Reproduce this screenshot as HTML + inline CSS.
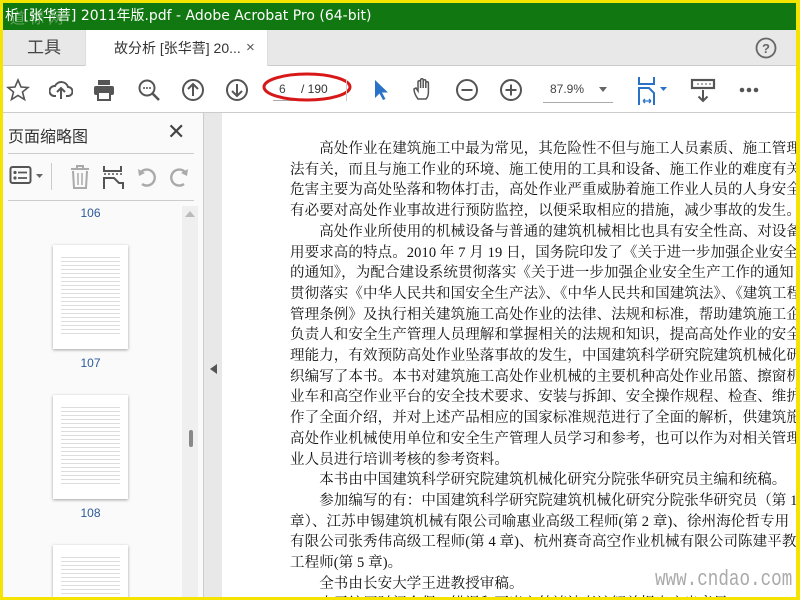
<!DOCTYPE html>
<html style="background:#f5e400"><head><meta charset="utf-8"><style>
*{margin:0;padding:0;box-sizing:border-box}
body{width:800px;height:600px;overflow:hidden;background:#f5e400;position:relative;font-family:"Liberation Sans","Noto Sans CJK SC",sans-serif}
.abs{position:absolute}
#title{left:3px;top:3px;width:793px;height:27px;background:#117711;color:#fff;font-family:"DejaVu Sans","Noto Sans CJK SC",sans-serif;font-size:14px;line-height:27px;padding-left:2px;white-space:nowrap;overflow:hidden}
#tabs{left:3px;top:30px;width:793px;height:36px;background:#e8e8e8;border-bottom:1px solid #ccc}
#tool{left:0;top:0;width:82px;height:36px;font-size:17px;color:#444;text-align:center;line-height:36px}
#tab{left:82px;top:0;width:183px;height:37px;background:#fff;font-size:14px;color:#333;line-height:36px;padding-left:28px;border-left:1px solid #ddd;border-right:1px solid #ddd}
#bar{left:3px;top:66px;width:793px;height:47px;background:#fff;border-bottom:1px solid #ccc}
#panel{left:3px;top:113px;width:201px;height:484px;background:#fafafa;border-right:1px solid #ccc;overflow:hidden}
#strip{left:204px;top:113px;width:18px;height:484px;background:#e8e8e8}
#page{left:222px;top:113px;width:574px;height:484px;background:#fff;overflow:hidden}
.ln{position:absolute;left:68px;white-space:nowrap;font-family:"Liberation Serif","Noto Serif CJK SC",serif;font-size:14.5px;color:#111;letter-spacing:0.1px}
.th{position:absolute;left:50px;width:75px;height:104px;background:#fff;box-shadow:0 1px 3px rgba(0,0,0,.35);padding:9px 8px 14px}
.th div{width:100%;height:100%;background-image:repeating-linear-gradient(#fff 0,#fff 3px,#ddd 3px,#ddd 4px)}
.lbl{position:absolute;left:0;width:175px;text-align:center;font-size:12px;color:#2c5a9a}
svg{position:absolute}
</style></head><body>
<div id="title" class="abs">析 [张华菩] 2011年版.pdf - Adobe Acrobat Pro (64-bit)</div>
<div class="abs" style="left:10px;top:7px;font-size:15px;color:rgba(255,255,255,.35)">道 标 网</div>
<div id="tabs" class="abs">
 <div id="tool" class="abs">工具</div>
 <div id="tab" class="abs">故分析 [张华菩] 20...<span style="position:absolute;left:160px;font-size:15px;color:#555">×</span></div>
 <svg style="left:752px;top:7px" width="22" height="22"><circle cx="11" cy="11" r="9.5" fill="none" stroke="#666" stroke-width="1.8"/><text x="11" y="16" text-anchor="middle" font-size="13" font-weight="bold" fill="#666" font-family="Liberation Sans">?</text></svg>
</div>
<div id="bar" class="abs">
 <svg style="left:3px;top:12px" width="24" height="24"><polygon points="12,2 15,9 22,9.5 16.5,14 18.5,21.5 12,17.5 5.5,21.5 7.5,14 2,9.5 9,9" fill="none" stroke="#555" stroke-width="1.6"/></svg>
 <svg style="left:46px;top:12px" width="24" height="24"><path d="M7 18 H5 A5 5 0 0 1 6 8 A7 7 0 0 1 19 9 A4.5 4.5 0 0 1 19 18 H17" fill="none" stroke="#555" stroke-width="2"/><path d="M12 21 V11 M8 14 L12 10 L16 14" fill="none" stroke="#555" stroke-width="2"/></svg>
 <svg style="left:89px;top:12px" width="24" height="24"><rect x="6" y="2" width="12" height="5" fill="#555"/><rect x="2" y="8" width="20" height="9" rx="2" fill="#555"/><rect x="6" y="14" width="12" height="8" fill="#fff" stroke="#555" stroke-width="2"/></svg>
 <svg style="left:134px;top:12px" width="24" height="24"><circle cx="10" cy="10" r="7.5" fill="none" stroke="#555" stroke-width="2"/><path d="M15.5 15.5 L22 22" stroke="#555" stroke-width="2.6"/><circle cx="7" cy="10" r="1" fill="#555"/><circle cx="10" cy="10" r="1" fill="#555"/><circle cx="13" cy="10" r="1" fill="#555"/></svg>
 <svg style="left:178px;top:12px" width="24" height="24"><circle cx="12" cy="12" r="10" fill="none" stroke="#555" stroke-width="2"/><path d="M12 18 V6 M7 11 L12 6 L17 11" fill="none" stroke="#555" stroke-width="2"/></svg>
 <svg style="left:222px;top:12px" width="24" height="24"><circle cx="12" cy="12" r="10" fill="none" stroke="#555" stroke-width="2"/><path d="M12 6 V18 M7 13 L12 18 L17 13" fill="none" stroke="#555" stroke-width="2"/></svg>
 <div class="abs" style="left:270px;top:16px;width:27px;height:19px;border-bottom:1px solid #aaa;font-size:12px;color:#444;padding-left:6px">6</div>
 <div class="abs" style="left:298px;top:16px;font-size:12px;color:#333">/ 190</div>
 <svg style="left:258px;top:3px" width="92" height="36"><ellipse cx="46" cy="18" rx="43" ry="13" fill="none" stroke="#d81818" stroke-width="3"/></svg>
 <div class="abs" style="left:343px;top:13px;width:1px;height:22px;background:#ccc"></div>
 <svg style="left:368px;top:12px" width="20" height="24"><path d="M4 2 L4 20 L8.5 15.5 L12 22 L14.5 21 L11 14.5 L17 14.5 Z" fill="#2a72c8"/></svg>
 <svg style="left:408px;top:11px" width="24" height="26"><path d="M7 22 C4 18 3 15 3 12 L5 11 L7 14 V5 A1.3 1.3 0 0 1 9.6 5 V11 V3 A1.3 1.3 0 0 1 12.2 3 V11 V4 A1.3 1.3 0 0 1 14.8 4 V11 V6 A1.3 1.3 0 0 1 17.4 6 V15 C17.4 19 16 21 15 22 Z" fill="none" stroke="#555" stroke-width="1.5"/></svg>
 <svg style="left:452px;top:12px" width="24" height="24"><circle cx="12" cy="12" r="10" fill="none" stroke="#555" stroke-width="2"/><path d="M6.5 12 H17.5" stroke="#555" stroke-width="2"/></svg>
 <svg style="left:496px;top:12px" width="24" height="24"><circle cx="12" cy="12" r="10" fill="none" stroke="#555" stroke-width="2"/><path d="M6.5 12 H17.5 M12 6.5 V17.5" stroke="#555" stroke-width="2"/></svg>
 <div class="abs" style="left:540px;top:16px;width:70px;height:21px;border-bottom:1px solid #aaa;font-size:12px;color:#444;padding-left:7px">87.9%</div>
 <svg style="left:596px;top:21px" width="10" height="6"><path d="M0 0 H8 L4 5 Z" fill="#666"/></svg>
 <svg style="left:634px;top:11px" width="34" height="28"><path d="M2 0 V7 H17 V0" fill="none" stroke="#2a72c8" stroke-width="2"/><path d="M2 28 V11 H12 L17 16 V28" fill="none" stroke="#2a72c8" stroke-width="2"/><path d="M6 24 H14 M6 24 L8 22 M6 24 L8 26 M14 24 L12 22 M14 24 L12 26" stroke="#2a72c8" stroke-width="1.3" fill="none"/><path d="M23 10 H30 L26.5 14 Z" fill="#2a72c8"/></svg>
 <svg style="left:687px;top:12px" width="26" height="26"><rect x="2" y="2" width="22" height="8" fill="none" stroke="#555" stroke-width="2.2"/><path d="M7 6 H9 M11 6 H13 M15 6 H17 M19 6 H21" stroke="#555"/><path d="M13 12 V23 M8.5 18.5 L13 23 L17.5 18.5" fill="none" stroke="#555" stroke-width="2"/></svg>
 <svg style="left:735px;top:20px" width="24" height="8"><circle cx="4" cy="4" r="2.3" fill="#555"/><circle cx="11" cy="4" r="2.3" fill="#555"/><circle cx="18" cy="4" r="2.3" fill="#555"/></svg>
</div>
<div id="panel" class="abs">
 <div class="abs" style="left:5px;top:10px;font-size:16px;color:#333">页面缩略图</div>
 <div class="abs" style="left:164px;top:6px;font-size:22px;color:#444">✕</div>
 <div class="abs" style="left:5px;top:40px;width:186px;height:1px;background:#ccc"></div>
 <svg style="left:6px;top:52px" width="36" height="22"><rect x="1.5" y="2" width="20" height="16" rx="2" fill="none" stroke="#555" stroke-width="2"/><circle cx="6" cy="7.5" r="1.6" fill="#555"/><circle cx="6" cy="13" r="1.6" fill="#555"/><path d="M9 7.5 H18 M9 13 H18" stroke="#555" stroke-width="1.8"/><path d="M27 9 H34 L30.5 13 Z" fill="#666"/></svg>
 <div class="abs" style="left:48px;top:50px;width:1px;height:27px;background:#ccc"></div>
 <svg style="left:65px;top:51px" width="24" height="26"><path d="M3 5 H21 M9 5 V2 H15 V5 M5 7 L6 24 H18 L19 7" fill="none" stroke="#aaa" stroke-width="2"/><path d="M10 9 V21 M14 9 V21" stroke="#aaa" stroke-width="1.5"/></svg>
 <svg style="left:99px;top:51px" width="24" height="26"><path d="M2 2 V7 H19 V2" fill="none" stroke="#555" stroke-width="2"/><path d="M2 10 H4 M6 10 H8 M10 10 H12 M14 10 H16 M18 10 H20" stroke="#555" stroke-width="1.5"/><path d="M2 25 V14 H12 L17 19 H21 V25" fill="none" stroke="#555" stroke-width="2"/></svg>
 <svg style="left:132px;top:52px" width="24" height="24"><path d="M7 19 A8 8 0 1 0 6 7" fill="none" stroke="#aaa" stroke-width="2.4"/><path d="M3 4 L4 11 L10 8 Z" fill="#aaa"/></svg>
 <svg style="left:166px;top:52px" width="24" height="24"><path d="M15 19 A8 8 0 1 1 16 7" fill="none" stroke="#aaa" stroke-width="2.4"/><path d="M19 4 L18 11 L12 8 Z" fill="#aaa"/></svg>
 <div class="abs" style="left:5px;top:87px;width:186px;height:1px;background:#ccc"></div>
 <div class="abs" style="left:179px;top:93px;width:16px;height:391px;background:#efefef"></div>
 <svg style="left:182px;top:98px" width="10" height="6"><path d="M0 6 L5 0 L10 6 Z" fill="#bbb"/></svg>
 <div class="abs" style="left:186px;top:317px;width:4px;height:17px;background:#888;border-radius:2px"></div>
 <div class="lbl" style="top:93px">106</div>
 <div class="th" style="top:132px"><div></div></div>
 <div class="lbl" style="top:243px">107</div>
 <div class="th" style="top:282px"><div></div></div>
 <div class="lbl" style="top:393px">108</div>
 <div class="th" style="top:432px"><div></div></div>
</div>
<div id="strip" class="abs"><svg style="left:6px;top:251px" width="8" height="10"><path d="M7 0 V10 L0 5 Z" fill="#555"/></svg></div>
<div id="page" class="abs">
 <div class="ln" style="top:24px">　　高处作业在建筑施工中最为常见，其危险性不但与施工人员素质、施工管理</div>
 <div class="ln" style="top:44.7px">法有关，而且与施工作业的环境、施工使用的工具和设备、施工作业的难度有关</div>
 <div class="ln" style="top:65.4px">危害主要为高处坠落和物体打击，高处作业严重威胁着施工作业人员的人身安全</div>
 <div class="ln" style="top:86.1px">有必要对高处作业事故进行预防监控，以便采取相应的措施，减少事故的发生。</div>
 <div class="ln" style="top:106.8px">　　高处作业所使用的机械设备与普通的建筑机械相比也具有安全性高、对设备</div>
 <div class="ln" style="top:127.5px">用要求高的特点。2010 年 7 月 19 日，国务院印发了《关于进一步加强企业安全</div>
 <div class="ln" style="top:148.2px">的通知》，为配合建设系统贯彻落实《关于进一步加强企业安全生产工作的通知</div>
 <div class="ln" style="top:168.9px">贯彻落实《中华人民共和国安全生产法》、《中华人民共和国建筑法》、《建筑工程</div>
 <div class="ln" style="top:189.6px">管理条例》及执行相关建筑施工高处作业的法律、法规和标准，帮助建筑施工企</div>
 <div class="ln" style="top:210.3px">负责人和安全生产管理人员理解和掌握相关的法规和知识，提高高处作业的安全</div>
 <div class="ln" style="top:231px">理能力，有效预防高处作业坠落事故的发生，中国建筑科学研究院建筑机械化研</div>
 <div class="ln" style="top:251.7px">织编写了本书。本书对建筑施工高处作业机械的主要机种高处作业吊篮、擦窗机</div>
 <div class="ln" style="top:272.4px">业车和高空作业平台的安全技术要求、安装与拆卸、安全操作规程、检查、维护</div>
 <div class="ln" style="top:293.1px">作了全面介绍，并对上述产品相应的国家标准规范进行了全面的解析，供建筑施</div>
 <div class="ln" style="top:313.8px">高处作业机械使用单位和安全生产管理人员学习和参考，也可以作为对相关管理</div>
 <div class="ln" style="top:334.5px">业人员进行培训考核的参考资料。</div>
 <div class="ln" style="top:355.2px">　　本书由中国建筑科学研究院建筑机械化研究分院张华研究员主编和统稿。</div>
 <div class="ln" style="top:375.9px">　　参加编写的有：中国建筑科学研究院建筑机械化研究分院张华研究员（第 1</div>
 <div class="ln" style="top:396.6px">章）、江苏申锡建筑机械有限公司喻惠业高级工程师(第 2 章)、徐州海伦哲专用</div>
 <div class="ln" style="top:417.3px">有限公司张秀伟高级工程师(第 4 章)、杭州赛奇高空作业机械有限公司陈建平教</div>
 <div class="ln" style="top:438px">工程师(第 5 章)。</div>
 <div class="ln" style="top:458.7px">　　全书由长安大学王进教授审稿。</div>
 <div class="ln" style="top:479.4px">　　由于编写时间仓促，错误和不当之处请读者谅解并提出宝贵意见。</div>
 <div class="abs" style="left:433px;top:454px;font-family:'Liberation Mono',monospace;font-size:22px;color:#aaa;transform:scaleX(0.8);transform-origin:left">www.cndao.com</div>
</div>
</body></html>
